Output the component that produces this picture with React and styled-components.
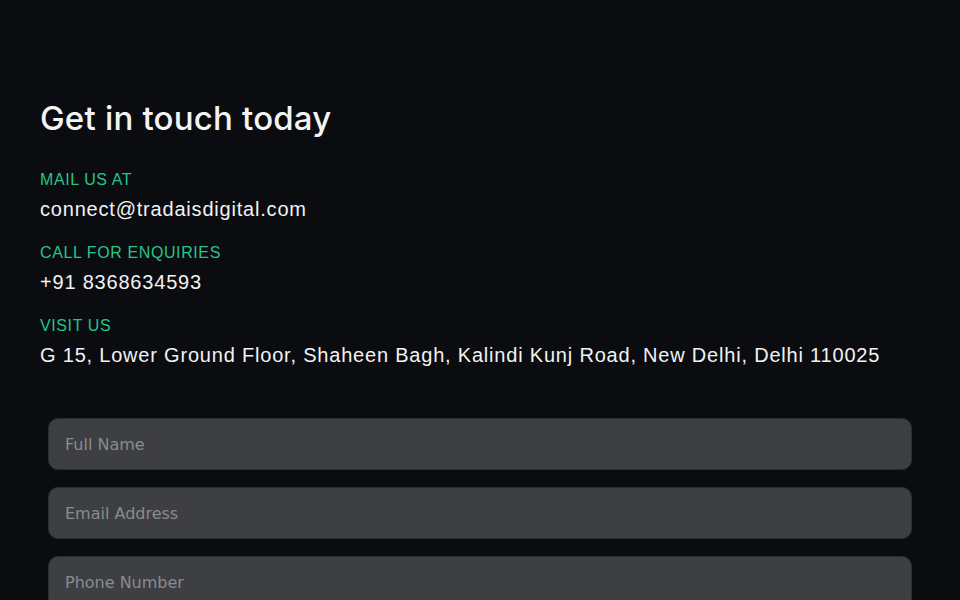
import React from "react";
import styled, { createGlobalStyle } from "styled-components";

const Global = createGlobalStyle`
  html, body { margin: 0; padding: 0; background: #0b0c10; }
  body { overflow: hidden; }
`;

const Page = styled.div`
  width: 960px;
  height: 600px;
  background: #0b0c10;
  box-sizing: border-box;
  padding: 100px 40px 0 40px;
  font-family: "Liberation Sans", Arial, sans-serif;
  color: #fff;
  overflow: hidden;
`;

const Heading = styled.h2`
  margin: 0 0 35px 0;
  font-family: Inter, "Liberation Sans", sans-serif;
  font-size: 33px;
  font-weight: 500;
  line-height: 36px;
  letter-spacing: 0.2px;
  color: #f4f4f4;
`;

const InfoList = styled.div`
  display: flex;
  flex-direction: column;
  gap: 22px;
`;

const InfoItem = styled.div`
  display: flex;
  flex-direction: column;
  gap: 7px;
`;

const Label = styled.div`
  font-size: 16px;
  line-height: 18px;
  color: #25c48a;
  letter-spacing: 0.6px;
  text-transform: uppercase;
`;

const Value = styled.div`
  font-size: 20px;
  line-height: 26px;
  color: #f2f2f2;
  letter-spacing: 0.8px;
`;

const Form = styled.form`
  margin-top: 50px;
  padding: 0 8px;
  display: flex;
  flex-direction: column;
  gap: 17px;
`;

const Input = styled.input`
  box-sizing: border-box;
  width: 100%;
  height: 52px;
  border-radius: 10px;
  border: 1px solid #2c2d30;
  background: #3e3f42;
  padding: 0 16px;
  font-family: "DejaVu Sans", sans-serif;
  font-size: 16px;
  color: #ddd;
  outline: none;
  &::placeholder { color: #8a8b8d; }
`;

export default function App() {
  const info = [
    ["Mail us at", "connect@tradaisdigital.com"],
    ["Call for enquiries", "+91 8368634593"],
    ["Visit us", "G 15, Lower Ground Floor, Shaheen Bagh, Kalindi Kunj Road, New Delhi, Delhi 110025"],
  ];
  return (
    <Page>
      <Global />
      <Heading>Get in touch today</Heading>
      <InfoList>
        {info.map(([l, v]) => (
          <InfoItem key={l}>
            <Label>{l}</Label>
            <Value>{v}</Value>
          </InfoItem>
        ))}
      </InfoList>
      <Form onSubmit={(e) => e.preventDefault()}>
        <Input placeholder="Full Name" />
        <Input placeholder="Email Address" />
        <Input placeholder="Phone Number" />
      </Form>
    </Page>
  );
}
